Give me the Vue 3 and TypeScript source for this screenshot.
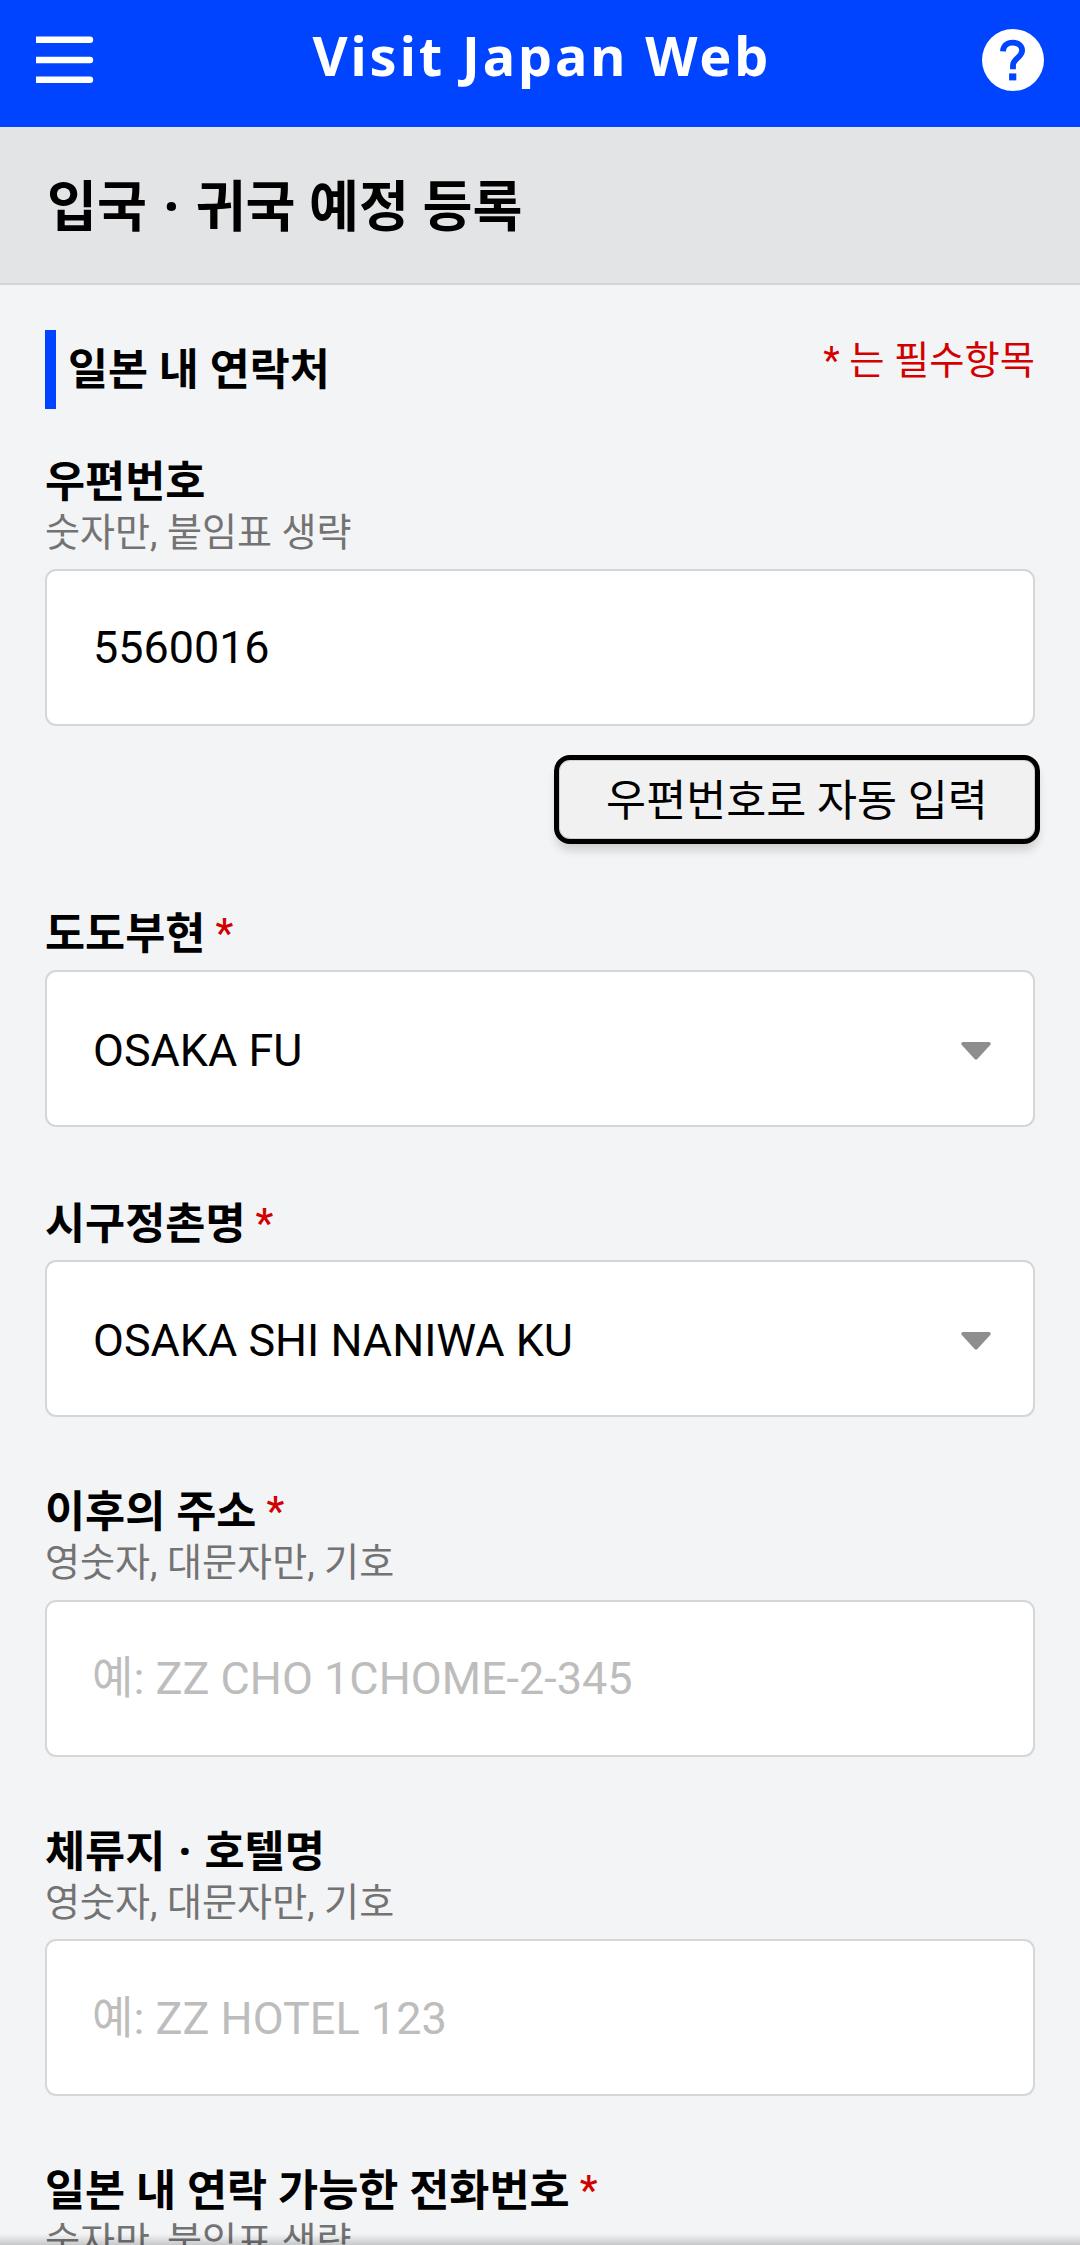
<script setup lang="ts">
interface Field {
  id: string
  label: string
  required?: boolean
  hint?: string
  value?: string
  placeholder?: string
  kind: 'text' | 'select'
  action?: string
}

const fields: Field[] = [
  { id: 'postal', label: '우편번호', hint: '숫자만, 붙임표 생략', value: '5560016', kind: 'text', action: '우편번호로 자동 입력' },
  { id: 'prefecture', label: '도도부현', required: true, value: 'OSAKA FU', kind: 'select' },
  { id: 'city', label: '시구정촌명', required: true, value: 'OSAKA SHI NANIWA KU', kind: 'select' },
  { id: 'address', label: '이후의 주소', required: true, hint: '영숫자, 대문자만, 기호', placeholder: '예: ZZ CHO 1CHOME-2-345', kind: 'text' },
  { id: 'hotel', label: '체류지 · 호텔명', hint: '영숫자, 대문자만, 기호', placeholder: '예: ZZ HOTEL 123', kind: 'text' },
  { id: 'phone', label: '일본 내 연락 가능한 전화번호', required: true, hint: '숫자만, 붙임표 생략', kind: 'text' },
]

// Splits a heading so that its middle dot can be spaced on its own.
const pieces = (text: string): string[] => text.split(/(·)/)
</script>

<template>
  <div class="page">
    <header class="topbar">
      <svg class="menu" width="58" height="48" viewBox="0 0 58 48" fill="#fff">
        <path d="M0 .6H54a3.2 3.2 0 0 1 0 6.4H0zM0 20.8H54a3.2 3.2 0 0 1 0 6.4H0zM0 40.6H54a3.2 3.2 0 0 1 0 6.4H0z" />
      </svg>
      <div class="brand">Visit Japan Web</div>
      <svg class="help" width="62" height="62" viewBox="0 0 62 62">
        <circle cx="31" cy="31" r="31" fill="#fff" />
        <path
          d="M21 22.4C21.2 17 25 13.7 30.8 13.7C36.6 13.7 40.1 17 40.1 21.6C40.1 28.4 31 29.4 31 36.4V40.2"
          fill="none"
          stroke="#0044ff"
          stroke-width="5.8"
        />
        <rect x="27.1" y="44.4" width="7.2" height="7" fill="#0044ff" />
      </svg>
    </header>

    <div class="titlebar">
      <h1><span v-for="(p, i) in pieces('입국 · 귀국 예정 등록')" :key="i" :class="{ dot: p === '·' }">{{ p }}</span></h1>
    </div>

    <main class="form">
      <div class="section">
        <h2>일본 내 연락처</h2>
        <span class="note">* 는 필수항목</span>
      </div>

      <div v-for="f in fields" :key="f.id" class="field">
        <div class="label" :class="{ bare: !f.hint }"><span v-for="(p, i) in pieces(f.label)" :key="i" :class="{ dot: p === '·' }">{{ p }}</span><span v-if="f.required" class="star">*</span></div>
        <div v-if="f.hint" class="hint">{{ f.hint }}</div>
        <div class="box" :class="f.kind">
          <span :class="f.value ? 'value' : 'placeholder'">{{ f.value ?? f.placeholder }}</span>
          <svg v-if="f.kind === 'select'" class="caret" width="30" height="18" viewBox="0 0 30 18">
            <path d="M1.6 0H28.4Q30.6 1.2 29.2 3L16.4 17Q15 18.4 13.6 17L.8 3Q-.6 1.2 1.6 0Z" fill="#8e8e8e" />
          </svg>
        </div>
        <button v-if="f.action" type="button" class="action">{{ f.action }}</button>
      </div>
    </main>
    <div class="bottom-shade"></div>
  </div>
</template>

<style>
body {
  margin: 0;
  background: #f3f4f6;
}
</style>

<style scoped>
.page {
  position: relative;
  width: 1080px;
  height: 2245px;
  overflow: hidden;
  background: #f3f4f6;
  color: #000;
  font-family: Roboto, "Noto Sans CJK KR", sans-serif;
}
.topbar {
  box-sizing: border-box;
  display: flex;
  align-items: flex-start;
  justify-content: space-between;
  height: 127px;
  padding: 0 36px;
  background: #0044ff;
}
.menu {
  margin-top: 36px;
}
.help {
  margin-top: 29px;
}
.brand {
  color: #fff;
  font: 700 54px/74px "Noto Sans", sans-serif;
  letter-spacing: 2.9px;
  margin: 18px 0 0 8px;
}
.titlebar {
  box-sizing: border-box;
  height: 158px;
  padding: 5px 47px 0;
  display: flex;
  align-items: center;
  background: #e2e4e6;
  border-bottom: 2px solid #d2d4d6;
}
h1,
h2 {
  margin: 0;
  font-weight: 700;
  white-space: nowrap;
}
h1 {
  font-size: 54.3px;
  line-height: 78px;
}
h1 span,
.label span {
  white-space: pre;
}
.dot {
  font-family: "Noto Sans", sans-serif;
  line-height: 1;
  margin: 0 0.06em;
}
.form {
  padding: 45px 45px 0;
}
.section {
  display: flex;
  justify-content: space-between;
  align-items: flex-start;
  height: 124.5px;
}
h2 {
  border-left: 11px solid #0044ff;
  padding: 3px 0 0 12px;
  font-size: 43.5px;
  line-height: 76px;
}
.note {
  font-size: 38.3px;
  line-height: 62px;
  color: #d20000;
  white-space: nowrap;
}
.field {
  display: flex;
  flex-direction: column;
  margin-bottom: 68px;
}
.label {
  height: 56px;
  font-size: 43.6px;
  font-weight: 700;
  line-height: 56px;
  white-space: nowrap;
}
.label.bare {
  line-height: 60px;
}
.star {
  font-size: 40px;
  font-weight: 500;
  line-height: 1;
  vertical-align: 2px;
  color: #d20000;
  margin-left: 10px;
}
.hint {
  font-size: 38.1px;
  line-height: 45.5px;
  margin-bottom: 4px;
  color: #737373;
  white-space: nowrap;
}
.box {
  box-sizing: border-box;
  display: flex;
  align-items: center;
  justify-content: space-between;
  height: 157px;
  margin-top: 9px;
  padding: 0 42px 0 46px;
  background: #fff;
  border: 2px solid #d5d6d8;
  border-radius: 11px;
}
.box.select {
  padding-top: 4px;
}
.value,
.placeholder {
  font-size: 44.9px;
  line-height: 60px;
  white-space: nowrap;
}
.placeholder {
  padding-top: 2px;
  margin-left: -1px;
  font-size: 45px;
  color: #bdbdbd;
}
.action {
  align-self: flex-end;
  box-sizing: border-box;
  width: 486px;
  height: 89px;
  margin: 29px -5px -7px 0;
  padding: 4px 0 0;
  border: 5px solid #000;
  border-radius: 16px;
  background: #f1f1f1;
  color: #000;
  font: 400 43.5px/60px Roboto, "Noto Sans CJK KR", sans-serif;
  box-shadow: inset 0 0 0 1px #cfcfcf, 0 8px 10px -2px rgba(0, 0, 0, 0.16);
}
.bottom-shade {
  position: absolute;
  left: 0;
  right: 0;
  bottom: 0;
  height: 11px;
  background: linear-gradient(rgba(0, 0, 0, 0), rgba(0, 0, 0, 0.18));
}
</style>
